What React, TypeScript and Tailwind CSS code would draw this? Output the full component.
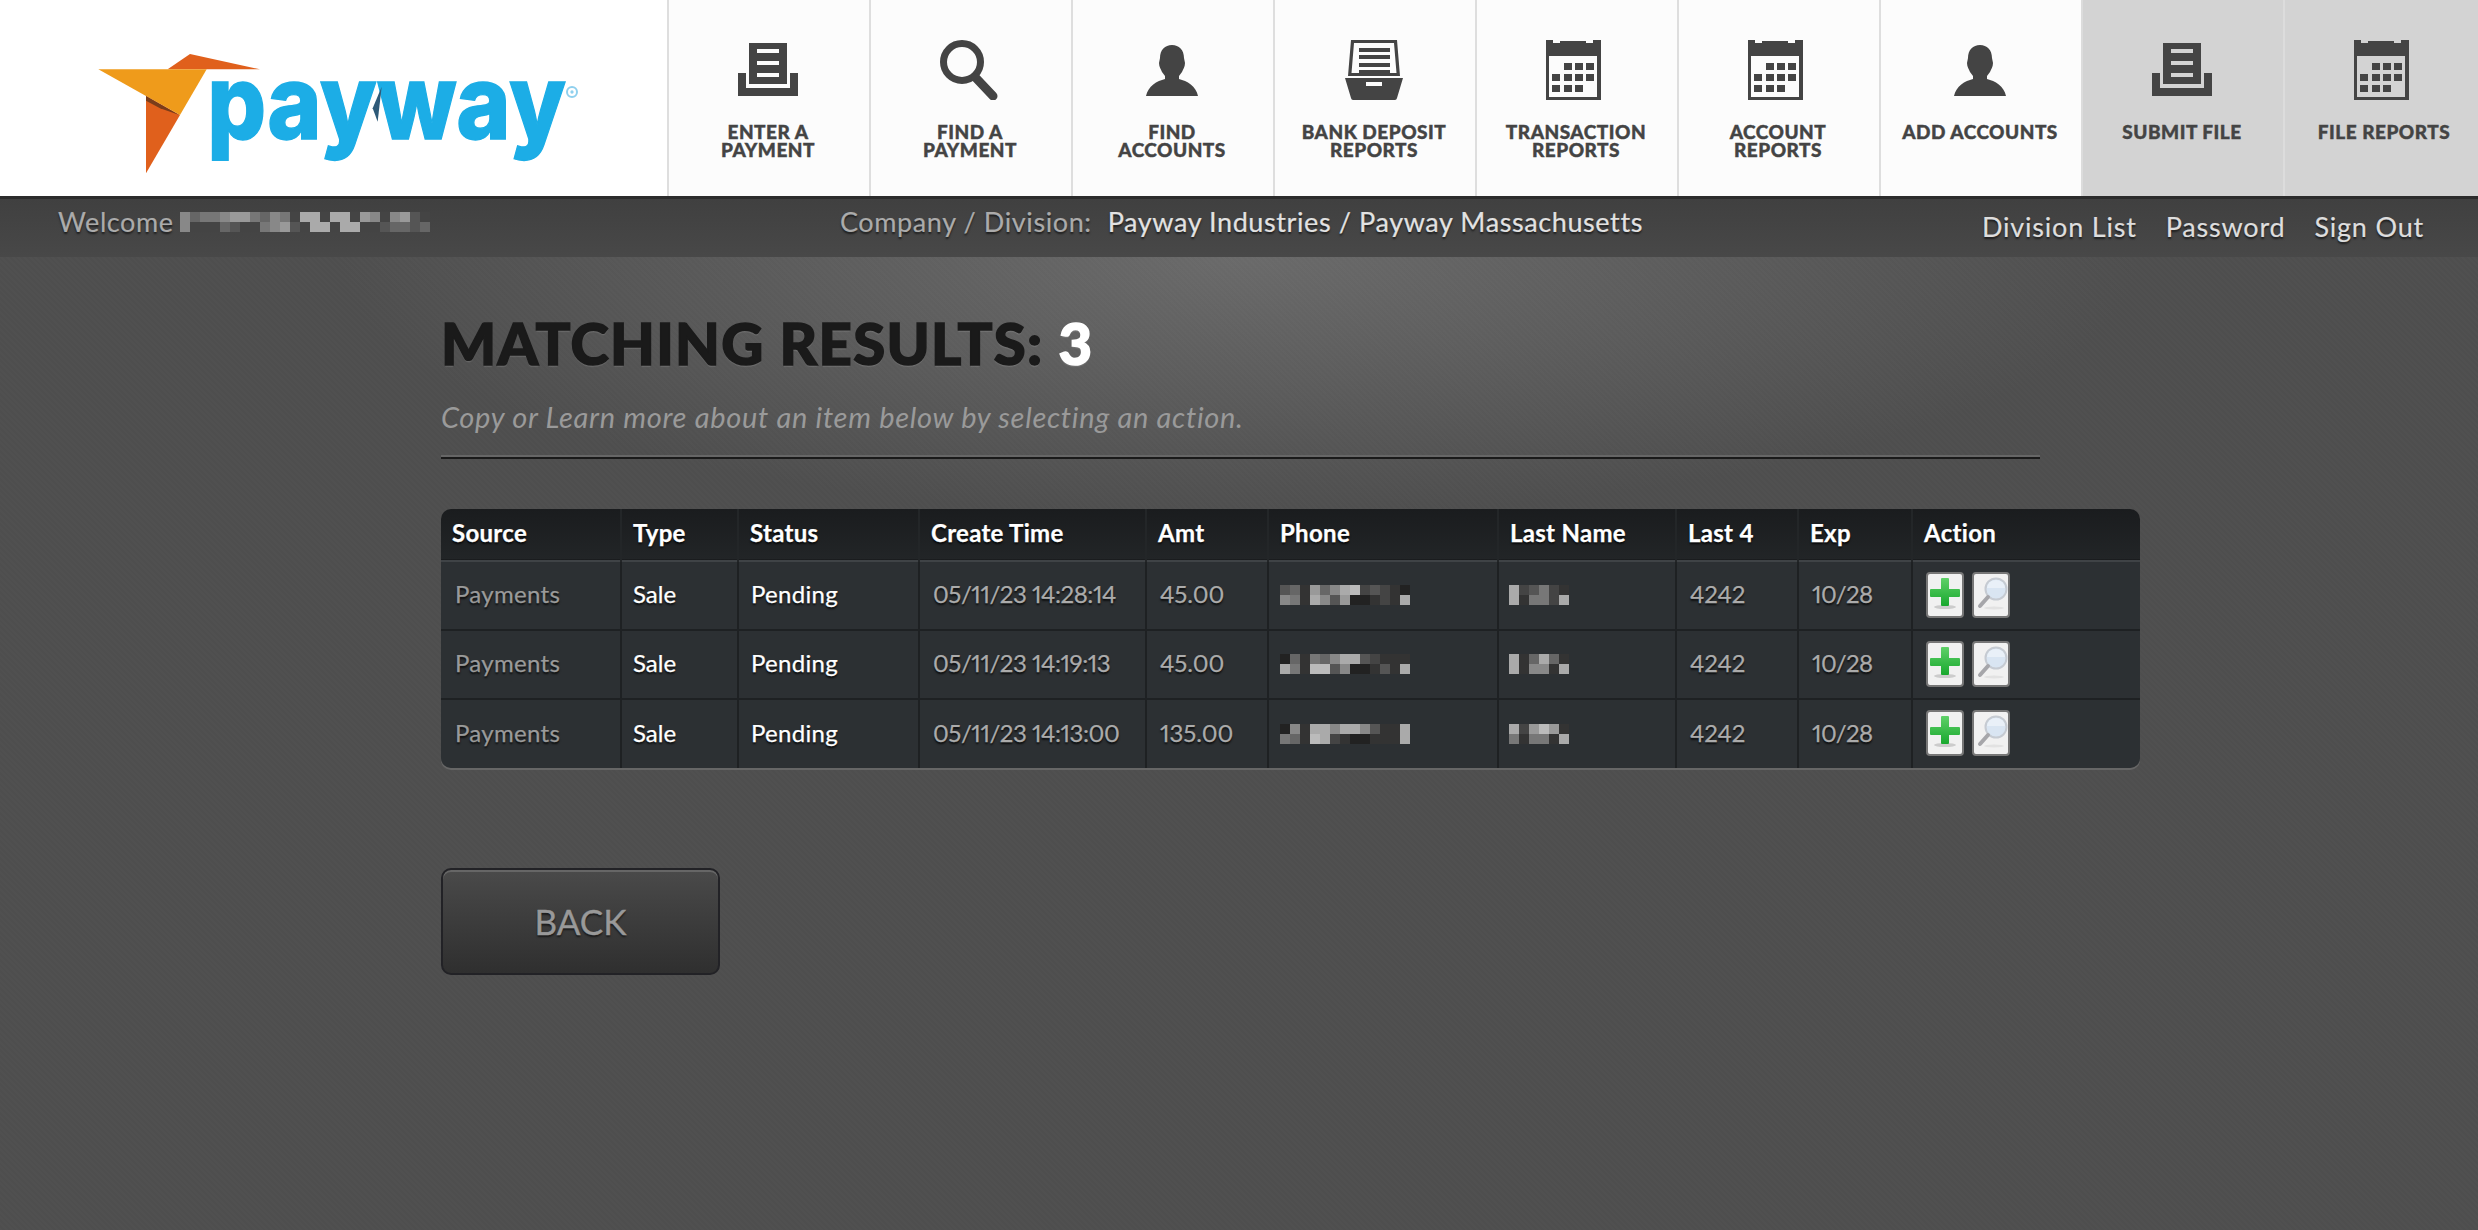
import React from "react";

const Doc = () => (
  <svg width="60" height="60" viewBox="0 0 60 60" fill="#444">
    <path fillRule="evenodd" d="M11 3h38v41H11zM19 9v4h22V9zM19 21v4h22v-4zM19 33v4h22v-4z" />
    <path d="M0 33h8v15h44V33h8v23H0z" />
  </svg>
);
const Search = () => (
  <svg width="60" height="60" viewBox="0 0 60 60" fill="none" stroke="#444">
    <circle cx="22" cy="22" r="18.5" strokeWidth="7" />
    <path d="M36 38L53 56" strokeWidth="9" strokeLinecap="round" />
  </svg>
);
const Person = () => (
  <svg width="60" height="60" viewBox="0 0 60 60" fill="#444">
    <path d="M30 5C37 5 42 10 42 18L43 23C43 27 41 29 40 32L37 36L37 39C45 41 54 46 56 56L4 56C6 46 15 41 23 39L23 36L20 32C19 29 17 27 17 23L18 18C18 10 23 5 30 5Z" />
  </svg>
);
const Drawer = () => (
  <svg width="60" height="60" viewBox="0 0 60 60" fill="#444">
    <path fillRule="evenodd" d="M7 0h46l3 36H4zM10 3L7.500 33h45L50 3z" />
    <path d="M15 8h31v4H15zM15 15h31v4H15zM15 23h31v4H15zM15 30h31v3H15z" />
    <path fillRule="evenodd" d="M1 38h58l-6 20c-.3 1-1 2-2 2H9c-1 0-1.700-1-2-2zM22 42v4h16v-4z" />
  </svg>
);
const Calendar = () => (
  <svg width="60" height="60" viewBox="3 0 60 60" fill="#444">
    <path fillRule="evenodd" d="M2 0h8v3h7V1h26v2h7V0h8v61H2zM6 16v41h48V16z" />
    <path d="M21 23h8v7h-8zM32 23h8v7h-8zM43 23h8v7h-8zM9 34h8v7H9zM21 34h8v7h-8zM32 34h8v7h-8zM43 34h8v7h-8zM9 45h8v7H9zM21 45h8v7h-8zM32 45h8v7h-8z" />
  </svg>
);

const navItems = [
  { lines: ["ENTER A", "PAYMENT"], Icon: Doc, active: false },
  { lines: ["FIND A", "PAYMENT"], Icon: Search, active: false },
  { lines: ["FIND", "ACCOUNTS"], Icon: Person, active: false },
  { lines: ["BANK DEPOSIT", "REPORTS"], Icon: Drawer, active: false },
  { lines: ["TRANSACTION", "REPORTS"], Icon: Calendar, active: false },
  { lines: ["ACCOUNT", "REPORTS"], Icon: Calendar, active: false },
  { lines: ["ADD ACCOUNTS"], Icon: Person, active: false },
  { lines: ["SUBMIT FILE"], Icon: Doc, active: true },
  { lines: ["FILE REPORTS"], Icon: Calendar, active: true },
];

const Logo = () => (
  <svg width="520" height="150" viewBox="0 0 1560 450" className="overflow-visible">
    <path d="M263 88L330 42L540 88Z" fill="#e0601c" />
    <path d="M198 168L300 225L198 400Z" fill="#e0601c" />
    <path d="M55 88L380 88L300 225L198 168Z" fill="#ef9b1b" />
    <path d="M198 168L298 225L240 205L198 182Z" fill="#7a3d1a" />
    <text
      x="382"
      y="298"
      fontFamily="Inter, sans-serif"
      fontWeight="800"
      fontSize="312"
      fill="#1cade6"
      stroke="#1cade6"
      strokeWidth="4"
      textLength="1076"
      lengthAdjust="spacingAndGlyphs"
    >
      payway
    </text>
    <path d="M905 140L878 205L893 245Z" fill="#2e5a78" />
    <circle cx="1476" cy="156" r="15" fill="none" stroke="#8fd0ee" strokeWidth="6" />
    <circle cx="1476" cy="156" r="5" fill="#8fd0ee" />
  </svg>
);

const Mosaic = ({ rows }: { rows: string[] }) => (
  <div className="flex flex-col">
    {rows.map((r, i) => (
      <div key={i} className="flex h-[10px]">
        {r.split("").map((c, j) => (
          <div key={j} className="h-[10px] w-[10px]" style={{ backgroundColor: `#${c}${c}${c}` }} />
        ))}
      </div>
    ))}
  </div>
);

const PlusBtn = () => (
  <button className="flex h-[46px] w-[38px] items-center justify-center rounded-[4px] border-2 border-[#777] bg-[#f1f1f1]">
    <svg width="34" height="42" viewBox="0 0 34 42">
      <defs>
        <linearGradient id="grn" x1="0" y1="0" x2="0" y2="1">
          <stop offset="0" stopColor="#5fd068" />
          <stop offset="1" stopColor="#18a82e" />
        </linearGradient>
      </defs>
      <ellipse cx="17" cy="33" rx="11" ry="2" fill="#ccc" />
      <path
        d="M13 5a1 1 0 0 1 1-1h6a1 1 0 0 1 1 1v10h10a1 1 0 0 1 1 1v6a1 1 0 0 1-1 1H21v8a1 1 0 0 1-1 1h-6a1 1 0 0 1-1-1v-8H3a1 1 0 0 1-1-1v-6a1 1 0 0 1 1-1h10z"
        fill="url(#grn)"
      />
    </svg>
  </button>
);
const GlassBtn = () => (
  <button className="flex h-[46px] w-[38px] items-center justify-center rounded-[4px] border-2 border-[#777] bg-[#f1f1f1]">
    <svg width="34" height="42" viewBox="0 0 34 42">
      <ellipse cx="20" cy="34" rx="10" ry="1.500" fill="#e2e2e2" />
      <circle cx="22" cy="15" r="10.500" fill="#d9e5f2" stroke="#c6cbd2" strokeWidth="2" />
      <path d="M13 14a9 8 0 0 1 18 0z" fill="#f0f5fb" opacity="0.7" />
      <path d="M14 23L6 32" stroke="#a6a6aa" strokeWidth="4" strokeLinecap="round" />
    </svg>
  </button>
);

const rows = [
  {
    time: "05/11/23 14:28:14",
    amt: "45.00",
    phone: ["563968ab45432", "873a85922343a"],
    name: ["a45743", "a3774a"],
  },
  {
    time: "05/11/23 14:19:13",
    amt: "45.00",
    phone: ["263768aa54333", "a73bb5822353a"],
    name: ["a36a63", "a3883a"],
  },
  {
    time: "05/11/23 14:13:00",
    amt: "135.00",
    phone: ["283aa8aa8533a", "763ba4322333a"],
    name: ["a49b93", "73773a"],
  },
];

const headers = ["Source", "Type", "Status", "Create Time", "Amt", "Phone", "Last Name", "Last 4", "Exp", "Action"];

const shadow = "[text-shadow:0_2px_2px_rgba(0,0,0,0.8)] [-webkit-text-stroke:0.25px_currentColor]";

export default function App() {
  return (
    <div className="flex h-[1230px] w-full flex-col overflow-hidden bg-[#4e4e4e] font-[Lato,sans-serif]">
      <header className="flex h-[196px] flex-none bg-white">
        <div className="h-[196px] w-[667px] flex-none pl-[80px] pt-[40px]">
          <Logo />
        </div>
        {navItems.map(({ lines, Icon, active }, i) => (
          <a
            key={i}
            className={`flex h-[196px] w-[202px] flex-none flex-col items-center border-l-2 pr-[2px] pt-[40px] text-[19px] leading-[18px] font-black text-[#444] ${
              active ? "border-[#dcdcdc] bg-[#d3d3d3]" : "border-[#dedede] bg-[#fcfcfc]"
            }`}
          >
            <Icon />
            <div className="mt-[23px] text-center tracking-[0.5px] [-webkit-text-stroke:0.4px_#444]">
              {lines.map((l, k) => (
                <React.Fragment key={l}>
                  {k > 0 && <br />}
                  {l}
                </React.Fragment>
              ))}
            </div>
          </a>
        ))}
      </header>

      <div className="flex h-[61px] flex-none items-start border-t-[3px] border-[#2c2c2c] bg-gradient-to-b from-[#404040] to-[#484848] text-[27px] leading-[46px] tracking-[0.6px] [-webkit-text-stroke:0.2px_currentColor] [text-shadow:0_2px_2px_rgba(0,0,0,0.6)]">
        <div className="flex w-[840px] flex-none items-center pl-[58px] text-[#ababab]">
          <span>Welcome</span>
          <div className="ml-[6px]">
            <Mosaic rows={["867789976874aa4aa49848954", "8444654478954aa4aa4456656"]} />
          </div>
        </div>
        <span className="text-[#ababab]">Company / Division:</span>
        <span className="ml-[16px] text-[#e2e2e2]">Payway Industries / Payway Massachusetts</span>
        <nav className="ml-auto flex gap-[29px] pr-[54px] pt-[5px] tracking-[0.8px] text-[#dedede]">
          <a>Division List</a>
          <a>Password</a>
          <a>Sign Out</a>
        </nav>
      </div>

      <main className="flex-1 bg-[repeating-linear-gradient(45deg,rgba(255,255,255,0.012)_0_2px,transparent_2px_4px),radial-gradient(ellipse_900px_260px_at_50%_0,#6a6a6a,#4e4e4e)] pl-[441px] pt-[52px]">
        <h1 className="text-[58px] leading-[68px] font-black tracking-[1.3px] text-[#1a1a1a] [-webkit-text-stroke:1.5px_#1a1a1a] [text-shadow:0_2px_1px_rgba(255,255,255,0.12)]">
          MATCHING RESULTS: <span className="text-white [-webkit-text-stroke:1.5px_#fff]">3</span>
        </h1>
        <p className="mt-[23px] text-[29px] leading-[34px] italic tracking-[0.7px] text-[#9a9a9a]">
          Copy or Learn more about an item below by selecting an action.
        </p>
        <div className="mt-[21px] h-[4px] w-[1599px] border-t-2 border-b-2 border-t-[#666] border-b-[#1a1a1a]" />

        <div className="mt-[50px] w-[1699px] overflow-hidden rounded-[10px] shadow-[0_2px_0_#666]">
          <table className="w-[1699px] table-fixed border-collapse text-[24px] leading-[30px]">
            <colgroup>
              <col className="w-[180px]" />
              <col className="w-[117px]" />
              <col className="w-[181px]" />
              <col className="w-[227px]" />
              <col className="w-[122px]" />
              <col className="w-[230px]" />
              <col className="w-[178px]" />
              <col className="w-[122px]" />
              <col className="w-[114px]" />
              <col className="w-[228px]" />
            </colgroup>
            <thead>
              <tr className="h-[52px] border-b-2 border-[#3f4346] bg-gradient-to-b from-[#1a1c1e] to-[#222527]">
                {headers.map((h) => (
                  <th
                    key={h}
                    className={`border-r-2 border-[#232628] pb-[4px] pl-[11px] text-left font-bold tracking-[0.3px] text-white last:border-r-0 ${shadow}`}
                  >
                    {h}
                  </th>
                ))}
              </tr>
            </thead>
            <tbody>
              {rows.map((r, i) => (
                <tr key={i} className="h-[69px] border-b-2 border-[#1e2123] bg-[#2c3033] last:border-b-0">
                  <td className={`border-r-2 border-[#1e2123] pb-[3px] pl-[14px] tracking-[0.3px] text-[#9a9a9a] ${shadow}`}>Payments</td>
                  <td className={`border-r-2 border-[#1e2123] pb-[3px] pl-[11px] text-white ${shadow}`}>Sale</td>
                  <td className={`border-r-2 border-[#1e2123] pb-[3px] pl-[12px] tracking-[0.3px] text-white ${shadow}`}>Pending</td>
                  <td className={`border-r-2 border-[#1e2123] pb-[3px] pl-[13px] tracking-[-0.45px] text-[#ababab] proportional-nums ${shadow}`}>{r.time}</td>
                  <td className={`border-r-2 border-[#1e2123] pb-[3px] pl-[13px] text-[#ababab] proportional-nums ${shadow}`}>{r.amt}</td>
                  <td className="border-r-2 border-[#1e2123] pb-[1px] pl-[11px]">
                    <Mosaic rows={r.phone} />
                  </td>
                  <td className="border-r-2 border-[#1e2123] pb-[1px] pl-[10px]">
                    <Mosaic rows={r.name} />
                  </td>
                  <td className={`border-r-2 border-[#1e2123] pb-[3px] pl-[13px] text-[#ababab] proportional-nums ${shadow}`}>4242</td>
                  <td className={`border-r-2 border-[#1e2123] pb-[3px] pl-[13px] tracking-[-0.6px] text-[#ababab] proportional-nums ${shadow}`}>10/28</td>
                  <td className="pb-[2px] pl-[13px]">
                    <div className="flex gap-[8px]">
                      <PlusBtn />
                      <GlassBtn />
                    </div>
                  </td>
                </tr>
              ))}
            </tbody>
          </table>
        </div>

        <button className="mt-[100px] flex h-[107px] w-[279px] items-center justify-center rounded-[10px] border-2 border-[#222226] bg-gradient-to-b from-[#4a4a4a] to-[#2f2f2f] text-[35px] text-[#999] shadow-[inset_0_2px_0_#666] [-webkit-text-stroke:0.4px_#999] [text-shadow:0_2px_2px_rgba(0,0,0,0.6)]">
          BACK
        </button>
      </main>
    </div>
  );
}
